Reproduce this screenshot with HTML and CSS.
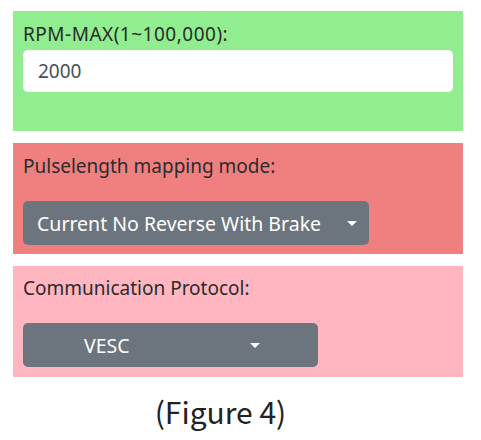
FILE: index.html
```html
<!DOCTYPE html>
<html lang="en">
<head>
  <meta charset="UTF-8">
  <title>ESC settings</title>
  <link rel="stylesheet" href="styles.css">
</head>
<body>

<div class="page">
  <div class="group group-rpm">
    <label class="group-label label-rpm" for="rpm">RPM-MAX(1~100,000):</label>
    <input class="text-input" type="text" id="rpm" value="2000">
  </div>

  <div class="group group-mode">
    <div class="group-label">Pulselength mapping mode:</div>
    <div class="dropdown dropdown-mode">
      <span class="dropdown-text">Current No Reverse With Brake</span>
      <span class="caret"></span>
    </div>
  </div>

  <div class="group group-proto">
    <div class="group-label">Communication Protocol:</div>
    <div class="dropdown dropdown-proto">
      <span class="dropdown-text">VESC</span>
      <span class="caret"></span>
    </div>
  </div>

  <p class="caption">(Figure 4)</p>
</div>

</body>
</html>
```

FILE: styles.css
```css
body {
  margin: 0;
  background: #ffffff;
  font-family: "Noto Sans", "Open Sans", sans-serif;
  color: #333;
}

.page {
  padding: 11px 18px 0 13px;
}

.group {
  padding: 10px 10px 0 10px;
  margin-bottom: 12px;
  box-sizing: border-box;
}

.group-rpm {
  background: #90ee90;
  height: 120px;
}

.group-mode {
  background: #f08080;
  height: 111px;
}

.group-proto {
  background: #ffb6c1;
  height: 111px;
  padding-top: 9px;
}

.group-label {
  display: block;
  font-size: 19px;
  line-height: 26px;
  color: #2b2b2b;
}

.label-rpm {
  letter-spacing: 0.5px;
}

.text-input {
  display: block;
  box-sizing: border-box;
  width: 100%;
  height: 42px;
  margin-top: 3px;
  padding: 0 15px;
  border: none;
  border-radius: 5px;
  background: #fff;
  font-family: inherit;
  font-size: 19px;
  color: #495057;
}

.dropdown {
  display: flex;
  align-items: center;
  box-sizing: border-box;
  height: 44px;
  margin-top: 22px;
  padding: 0 12px 0 14px;
  background: #6c757d;
  border-radius: 5px;
  color: #fff;
  font-size: 19.5px;
}

.dropdown-mode {
  width: 346px;
}

.dropdown-proto {
  width: 295px;
  padding-left: 61px;
  margin-top: 22px;
}

.caret {
  width: 0;
  height: 0;
  margin-left: auto;
  border-top: 5px solid #fff;
  border-left: 5px solid transparent;
  border-right: 5px solid transparent;
}

.dropdown-proto .caret {
  margin-left: 120px;
}

.caption {
  margin: 14px 0 0;
  text-align: center;
  font-family: "Noto Sans CJK SC", "Noto Sans", sans-serif;
  font-size: 30px;
  line-height: 40px;
  color: #222;
  padding-right: 35px;
}
```
